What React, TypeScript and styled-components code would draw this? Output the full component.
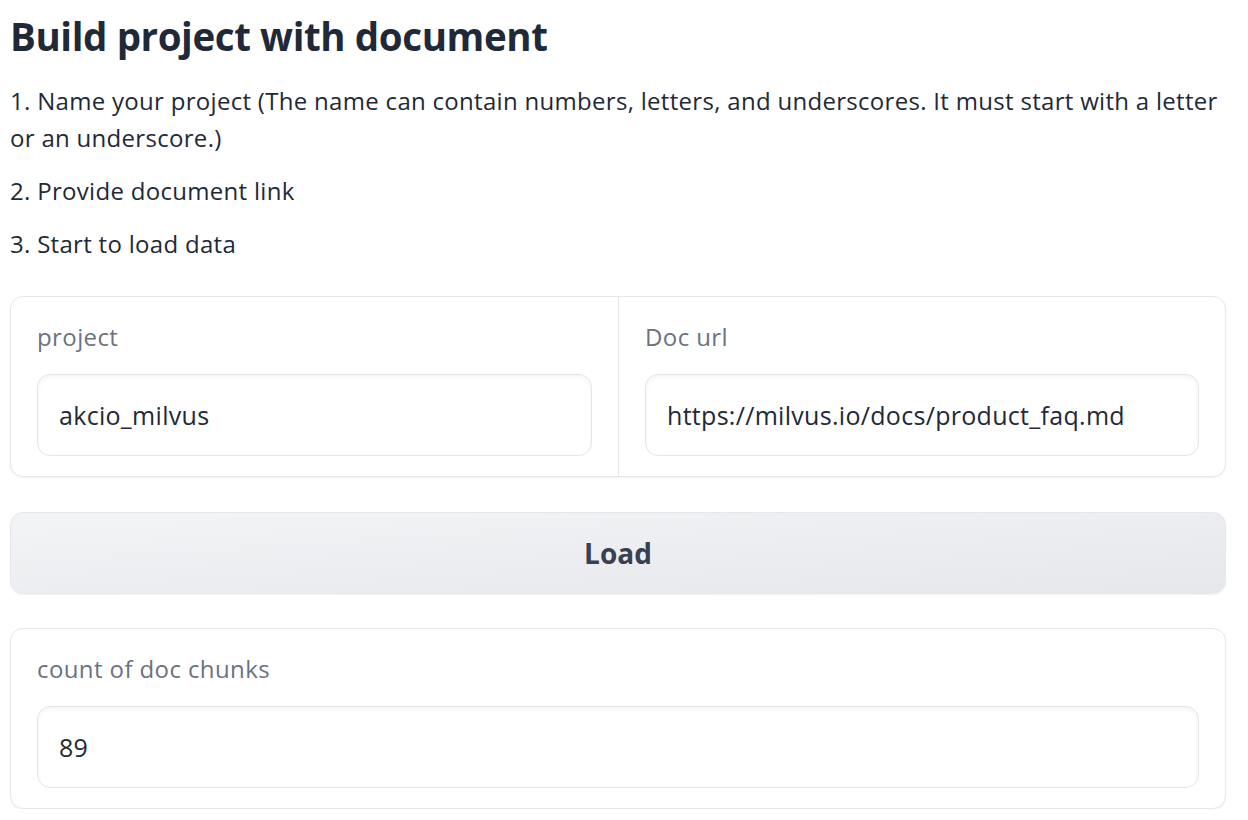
import React from 'react';
import styled, { createGlobalStyle } from 'styled-components';

const GlobalStyle = createGlobalStyle`
  body {
    margin: 0;
    background: #ffffff;
    font-family: "Source Sans Pro", "Open Sans", "Liberation Sans", sans-serif;
    color: #1f2937;
  }
`;

const Page = styled.div`
  display: flex;
  flex-direction: column;
  padding: 8px 22px 0 10px;
`;

const Title = styled.h1`
  margin: 0 0 18px;
  font-size: 38.5px;
  line-height: 56px;
  font-weight: 700;
  letter-spacing: -0.4px;
  color: #1f2937;
`;

const Step = styled.p`
  margin: 0 0 16px;
  font-size: 24px;
  line-height: 37px;
  letter-spacing: 0.3px;
  color: #1f2937;
`;

const Steps = styled.div`
  margin-bottom: 34px;
  & > p:last-child {
    margin-bottom: 0;
  }
`;

const Card = styled.div<{ $cols?: number }>`
  display: grid;
  grid-template-columns: repeat(${(p) => p.$cols ?? 1}, 1fr);
  border: 1px solid #e5e7eb;
  border-radius: 13px;
  box-shadow: 0 1px 2px rgba(0, 0, 0, 0.05);
  background: #fff;
  overflow: hidden;
`;

const Field = styled.div`
  display: flex;
  flex-direction: column;
  gap: 18px;
  padding: 21px 26px 20px;
  & + & {
    border-left: 1px solid #e5e7eb;
  }
`;

const Label = styled.span`
  font-size: 24px;
  line-height: 38px;
  letter-spacing: 0.4px;
  color: #6b7280;
`;

const Input = styled.div`
  height: 82px;
  box-sizing: border-box;
  display: flex;
  align-items: center;
  padding: 0 21px;
  border: 1.5px solid #e3e5e9;
  border-radius: 13px;
  box-shadow: inset 0 2px 4px rgba(0, 0, 0, 0.05);
  font-size: 25px;
  letter-spacing: 0.3px;
  color: #1f2937;
  background: #fff;
`;

const Button = styled.div`
  height: 82px;
  box-sizing: border-box;
  margin: 35px 0 34px;
  display: flex;
  align-items: center;
  justify-content: center;
  border: 1.5px solid #e5e7eb;
  border-radius: 13px;
  background: linear-gradient(to bottom right, #f3f4f6, #e5e7eb);
  box-shadow: 0 1px 2px rgba(0, 0, 0, 0.05);
  font-size: 28px;
  font-weight: 700;
  color: #374151;
`;

export default function App() {
  return (
    <Page>
      <GlobalStyle />
      <Title>Build project with document</Title>
      <Steps>
        <Step>
          1. Name your project (The name can contain numbers, letters, and underscores. It must start with a letter
          or an underscore.)
        </Step>
        <Step>2. Provide document link</Step>
        <Step>3. Start to load data</Step>
      </Steps>
      <Card $cols={2}>
        <Field>
          <Label>project</Label>
          <Input>akcio_milvus</Input>
        </Field>
        <Field>
          <Label>Doc url</Label>
          <Input>https://milvus.io/docs/product_faq.md</Input>
        </Field>
      </Card>
      <Button>Load</Button>
      <Card>
        <Field>
          <Label>count of doc chunks</Label>
          <Input>89</Input>
        </Field>
      </Card>
    </Page>
  );
}
